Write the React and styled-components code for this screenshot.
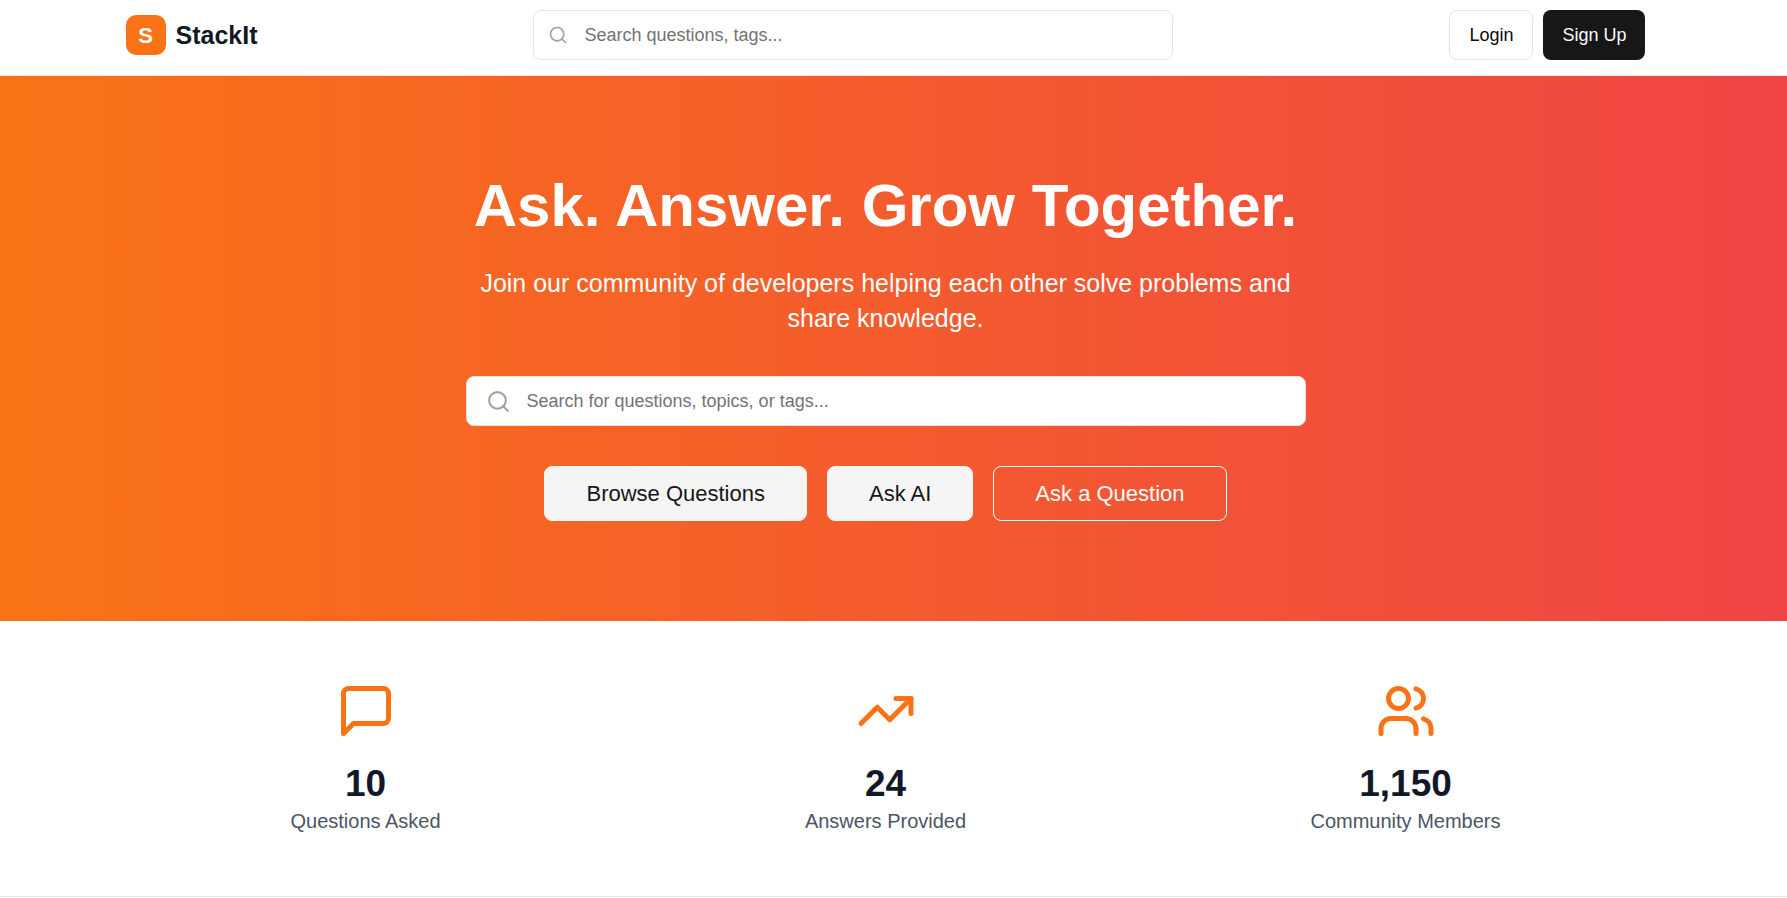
import React from "react";
import styled, { createGlobalStyle, css } from "styled-components";
import { Search } from "lucide-react";

const GlobalStyle = createGlobalStyle`
  *, *::before, *::after { box-sizing: border-box; }
  html { scrollbar-width: none; }
  body {
    margin: 0;
    background: #ffffff;
    color: #0a0a0a;
    font-family: "Liberation Sans", Arial, sans-serif;
    font-size: 20px;
    line-height: 30px;
  }
  h1, p { margin: 0; }
`;

const Page = styled.div`
  --gutter: 16px;
`;

const Container = styled.div`
  max-width: 1600px;
  margin: 0 auto;
  padding: 0 40px;
`;

const Header = styled.header`
  padding: 10px var(--gutter) 15px 0;
  border-bottom: 1px solid #e5e5e5;
`;

const HeaderRow = styled(Container)`
  display: flex;
  align-items: center;
  justify-content: space-between;
`;

const Brand = styled.a`
  display: flex;
  align-items: center;
  gap: 10px;
  color: #111827;
  font-size: 25px;
  line-height: 35px;
  font-weight: 700;
  text-decoration: none;
`;

const BrandMark = styled.span`
  display: grid;
  place-items: center;
  width: 40px;
  height: 40px;
  border-radius: 10px;
  background: #f97316;
  color: #ffffff;
  font-size: 22px;
`;

const SearchBox = styled.label`
  display: flex;
  align-items: center;
  gap: 16px;
  height: 50px;
  padding: 0 ${(p) => (p.$large ? 19 : 14)}px;
  border: 1px solid #e5e5e5;
  border-radius: 8px;
  background: #ffffff;
  color: #9ca3af;
  cursor: text;
`;

const SearchInput = styled.input`
  flex: 1;
  min-width: 0;
  padding: 0;
  border: 0;
  outline: 0;
  background: transparent;
  color: #0a0a0a;
  font: inherit;
  font-size: 18px;
  &::placeholder { color: #737373; opacity: 1; }
`;

const HeaderSearch = styled.form`
  flex: 1;
  max-width: 640px;
  margin: 0 40px;
`;

const Actions = styled.div`
  display: flex;
  gap: ${(p) => (p.$wide ? 20 : 10)}px;
  justify-content: center;
  flex-wrap: wrap;
`;

const variants = {
  outline: css`
    background: #ffffff;
    border-color: #e5e5e5;
    color: #0a0a0a;
  `,
  dark: css`
    background: #171717;
    border: 0;
    color: #fafafa;
  `,
  light: css`
    background: #f5f5f5;
    border-color: #f5f5f5;
    color: #171717;
  `,
  ghost: css`
    background: transparent;
    border-color: #ffffff;
    color: #ffffff;
  `,
};

const Button = styled.button`
  height: ${(p) => (p.$large ? 55 : 50)}px;
  padding: 0 ${(p) => (p.$large ? 41 : 19)}px;
  border: 1px solid;
  border-radius: 8px;
  font: inherit;
  font-size: ${(p) => (p.$large ? 22 : 18)}px;
  white-space: nowrap;
  cursor: pointer;
  ${(p) => variants[p.$variant]}
`;

const Hero = styled.section`
  padding: 100px var(--gutter) 100px 0;
  background: linear-gradient(to right, #f97316, #ef4444);
  color: #ffffff;
  text-align: center;
`;

const HeroTitle = styled.h1`
  font-size: 60px;
  line-height: 60px;
  font-weight: 700;
`;

const HeroText = styled.p`
  max-width: 840px;
  margin: 30px auto 40px;
  font-size: 25px;
  line-height: 35px;
`;

const HeroSearch = styled.form`
  max-width: 840px;
  margin: 0 auto 40px;
`;

const Stats = styled.section`
  padding: 60px var(--gutter) 60px 0;
  border-bottom: 1px solid #e5e5e5;
`;

const StatGrid = styled(Container)`
  display: grid;
  grid-template-columns: repeat(3, 1fr);
  gap: 40px;
`;

const Stat = styled.div`
  display: flex;
  flex-direction: column;
  align-items: center;
`;

const StatIcon = styled.svg`
  width: 60px;
  height: 60px;
  margin-bottom: 20px;
  fill: none;
  stroke: #f97316;
  stroke-width: 2;
  stroke-linecap: round;
  stroke-linejoin: round;
`;

const StatValue = styled.p`
  color: #111827;
  font-size: 37px;
  line-height: 45px;
  font-weight: 700;
`;

const StatLabel = styled.p`
  color: #4b5563;
`;

const stats = [
  {
    value: "10",
    label: "Questions Asked",
    icon: <path d="M21 15a2 2 0 0 1-2 2H7l-4 4V5a2 2 0 0 1 2-2h14a2 2 0 0 1 2 2z" />,
  },
  {
    value: "24",
    label: "Answers Provided",
    icon: (
      <>
        <polyline points="22 7 13.5 15.5 8.5 10.5 2 17" />
        <polyline points="16 7 22 7 22 13" />
      </>
    ),
  },
  {
    value: "1,150",
    label: "Community Members",
    icon: (
      <>
        <path d="M16 21v-2a4 4 0 0 0-4-4H6a4 4 0 0 0-4 4v2" />
        <circle cx="9" cy="7" r="4" />
        <path d="M22 21v-2a4 4 0 0 0-3-3.87" />
        <path d="M16 3.13a4 4 0 0 1 0 7.75" />
      </>
    ),
  },
];

export default function App() {
  return (
    <Page>
      <GlobalStyle />
      <Header>
        <HeaderRow>
          <Brand href="#">
            <BrandMark>S</BrandMark>
            StackIt
          </Brand>
          <HeaderSearch role="search">
            <SearchBox>
              <Search size={20} aria-hidden="true" />
              <SearchInput type="text" aria-label="Search questions, tags" placeholder="Search questions, tags..." />
            </SearchBox>
          </HeaderSearch>
          <Actions>
            <Button type="button" $variant="outline">Login</Button>
            <Button type="button" $variant="dark">Sign Up</Button>
          </Actions>
        </HeaderRow>
      </Header>
      <main>
        <Hero>
          <Container>
            <HeroTitle>Ask. Answer. Grow Together.</HeroTitle>
            <HeroText>
              Join our community of developers helping each other solve problems and share knowledge.
            </HeroText>
            <HeroSearch role="search">
              <SearchBox $large>
                <Search size={25} aria-hidden="true" />
                <SearchInput type="text" aria-label="Search for questions, topics, or tags" placeholder="Search for questions, topics, or tags..." />
              </SearchBox>
            </HeroSearch>
            <Actions $wide>
              <Button type="button" $large $variant="light">Browse Questions</Button>
              <Button type="button" $large $variant="light">Ask AI</Button>
              <Button type="button" $large $variant="ghost">Ask a Question</Button>
            </Actions>
          </Container>
        </Hero>
        <Stats>
          <StatGrid>
            {stats.map((s) => (
              <Stat key={s.label}>
                <StatIcon viewBox="0 0 24 24" aria-hidden="true">{s.icon}</StatIcon>
                <StatValue>{s.value}</StatValue>
                <StatLabel>{s.label}</StatLabel>
              </Stat>
            ))}
          </StatGrid>
        </Stats>
      </main>
    </Page>
  );
}
